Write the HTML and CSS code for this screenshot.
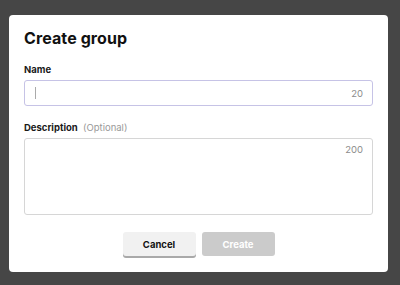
FILE: index.html
```html
<!DOCTYPE html>
<html lang="en">
<head>
  <meta charset="UTF-8" />
  <title>Create group</title>
  <link rel="stylesheet" href="styles.css">
</head>
<body>

<div class="modal">
  <h1 class="modal-title">Create group</h1>

  <!-- Name -->
  <label class="field-label">Name</label>
  <div class="input-box focused">
    <span class="caret"></span>
    <span class="counter">20</span>
  </div>

  <!-- Description -->
  <label class="field-label desc-label">Description <span class="optional">(Optional)</span></label>
  <div class="textarea-box">
    <span class="counter">200</span>
  </div>

  <div class="actions">
    <button class="btn btn-cancel">Cancel</button>
    <button class="btn btn-create" disabled>Create</button>
  </div>
</div>

</body>
</html>
```

FILE: styles.css
```css
body {
  font-family: Inter, "Open Sans", sans-serif;
  background: #464646;
  margin: 0;
  padding: 15px 12px 0 9px;
}

.modal {
  background: #fff;
  border-radius: 4px;
  width: 379px;
  height: 257px;
  box-sizing: border-box;
  padding: 13px 15px 0 15px;
}

.modal-title {
  margin: 0 0 16px;
  font-size: 16px;
  font-weight: 700;
  color: #111;
  line-height: 20px;
  letter-spacing: 0.1px;
}

.field-label {
  display: block;
  font-size: 9.5px;
  font-weight: 700;
  color: #1a1a1a;
  line-height: 12px;
  margin-bottom: 4px;
}

.desc-label {
  margin-top: 16px;
}

.optional {
  font-weight: 400;
  color: #999;
  margin-left: 3px;
}

.input-box {
  height: 26px;
  border: 1px solid #d0d0d8;
  border-radius: 3px;
  box-sizing: border-box;
  display: flex;
  align-items: center;
  justify-content: space-between;
  padding: 0 9px 0 10px;
}

.input-box.focused {
  border-color: #c6c3e6;
}

.caret {
  width: 1px;
  height: 12px;
  background: #aaa;
}

.counter {
  font-size: 9.5px;
  color: #8c8c8c;
}

.textarea-box {
  height: 77px;
  border: 1px solid #d6d6d6;
  border-radius: 3px;
  box-sizing: border-box;
  display: flex;
  justify-content: flex-end;
  padding: 5px 9px 0 0;
}

.actions {
  display: flex;
  justify-content: center;
  gap: 6px;
  margin-top: 17px;
}

.btn {
  width: 73px;
  height: 24px;
  border: none;
  border-radius: 3px;
  font-family: Inter, "Open Sans", sans-serif;
  font-size: 9.5px;
  font-weight: 700;
  cursor: pointer;
}

.btn-cancel {
  background: #f1f1f1;
  color: #111;
  box-shadow: 0 2px 0 #a9a9a9;
}

.btn-create {
  background: #cbcbcb;
  color: #fff;
  cursor: default;
}
```
